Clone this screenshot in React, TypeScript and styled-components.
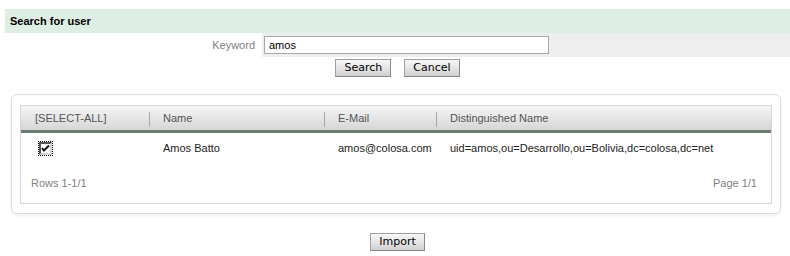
import styled, { createGlobalStyle } from "styled-components";

const GlobalStyle = createGlobalStyle`
  body {
    margin: 0;
    font-family: "Liberation Sans", Arial, sans-serif;
    font-size: 11px;
    color: #222;
    background: #fff;
  }
`;

interface User {
  name: string;
  email: string;
  dn: string;
  checked: boolean;
}

const users: User[] = [
  {
    name: "Amos Batto",
    email: "amos@colosa.com",
    dn: "uid=amos,ou=Desarrollo,ou=Bolivia,dc=colosa,dc=net",
    checked: true,
  },
];

const columns = ["[SELECT-ALL]", "Name", "E-Mail", "Distinguished Name"];

function CheckMark({ checked }: { checked: boolean }) {
  return (
    <CheckBox>
      {checked && (
        <svg width="9" height="9" viewBox="0 0 9 9">
          <path d="M1 4 L3 6.5 L8 1.5" stroke="#111" strokeWidth="2" fill="none" />
        </svg>
      )}
    </CheckBox>
  );
}

export default function App() {
  return (
    <>
      <GlobalStyle />
      <Page>
        <TitleBar>Search for user</TitleBar>
        <FormRow>
          <Label>Keyword</Label>
          <InputCell>
            <TextInput defaultValue="amos" />
          </InputCell>
        </FormRow>
        <ButtonRow>
          <Button>Search</Button>
          <Button>Cancel</Button>
        </ButtonRow>

        <Panel>
          <Grid>
            <HeaderRow>
              {columns.map((c, i) => (
                <HeaderCell key={c} $first={i === 0}>
                  {c}
                </HeaderCell>
              ))}
            </HeaderRow>
            {users.map((u) => (
              <BodyRow key={u.email}>
                <Cell>
                  <CheckMark checked={u.checked} />
                </Cell>
                <Cell>{u.name}</Cell>
                <Cell>{u.email}</Cell>
                <Cell>{u.dn}</Cell>
              </BodyRow>
            ))}
            <Footer>
              <span>Rows 1-1/1</span>
              <span>Page 1/1</span>
            </Footer>
          </Grid>
        </Panel>

        <ButtonRow $top={19}>
          <Button>Import</Button>
        </ButtonRow>
      </Page>
    </>
  );
}

const Page = styled.div`
  padding: 9px 0 0 5px;
`;

const TitleBar = styled.div`
  height: 24px;
  line-height: 24px;
  background: #dfeee4;
  font-weight: bold;
  color: #000;
  padding-left: 5px;
`;

const FormRow = styled.div`
  display: grid;
  grid-template-columns: 257px 1fr;
  height: 24px;
`;

const Label = styled.div`
  display: flex;
  align-items: center;
  justify-content: flex-end;
  padding-right: 7px;
  color: #808080;
  font-size: 11px;
`;

const InputCell = styled.div`
  background: #eeeeee;
  display: flex;
  align-items: center;
  padding-left: 2px;
`;

const TextInput = styled.input`
  box-sizing: border-box;
  width: 285px;
  height: 18px;
  border: 1px solid #a8a8a8;
  padding: 0 4px;
  font-family: "Liberation Sans", Arial, sans-serif;
  font-size: 11px;
  color: #000;
  outline: none;
`;

const ButtonRow = styled.div<{ $top?: number }>`
  display: flex;
  justify-content: center;
  gap: 13px;
  margin-top: ${(p) => p.$top ?? 2}px;
`;

const Button = styled.button`
  box-sizing: border-box;
  height: 18px;
  min-width: 52px;
  padding: 0 8px;
  border: 1px solid #a0a0a0;
  border-bottom-color: #888;
  border-right-color: #888;
  background: linear-gradient(#f7f7f7, #e2e2e2 60%, #cfcfcf);
  font-family: "DejaVu Sans", Verdana, sans-serif;
  font-size: 11px;
  line-height: 16px;
  color: #000;
  cursor: pointer;
`;

const Panel = styled.div`
  margin: 17px 9px 0 6px;
  border: 1px solid #dcdcdc;
  border-radius: 6px;
  padding: 10px 8px 9px 8px;
  box-shadow: 0 2px 3px rgba(0, 0, 0, 0.06);
`;

const Grid = styled.div`
  border: 1px solid #d6d6d6;
  display: grid;
  grid-template-columns: 128px 175px 112px 1fr;
`;

const HeaderRow = styled.div`
  display: contents;
`;

const HeaderCell = styled.div<{ $first?: boolean }>`
  position: relative;
  height: 24px;
  line-height: 24px;
  padding-left: 14px;
  color: #555;
  background: linear-gradient(#f6f6f6, #e6e6e6 50%, #d6d6d6);
  border-bottom: 3px solid #6e7d72;

  &::before {
    content: "";
    display: ${(p) => (p.$first ? "none" : "block")};
    position: absolute;
    left: 0;
    top: 6px;
    height: 15px;
    border-left: 1px solid #a8a8a8;
  }
`;

const BodyRow = styled.div`
  display: contents;
`;

const Cell = styled.div`
  height: 30px;
  display: flex;
  align-items: center;
  padding-left: 14px;
  color: #222;
`;

const CheckBox = styled.span`
  box-sizing: border-box;
  width: 13px;
  height: 13px;
  margin-left: 4px;
  border: 2px solid #555;
  border-right-color: #d4d4d4;
  border-bottom-color: #d4d4d4;
  background: #fff;
  outline: 1px dotted #000;
  outline-offset: 0;
  display: flex;
  align-items: center;
  justify-content: center;
`;

const Footer = styled.div`
  grid-column: 1 / -1;
  display: flex;
  justify-content: space-between;
  padding: 14px 14px 14px 10px;
  color: #808080;
`;
